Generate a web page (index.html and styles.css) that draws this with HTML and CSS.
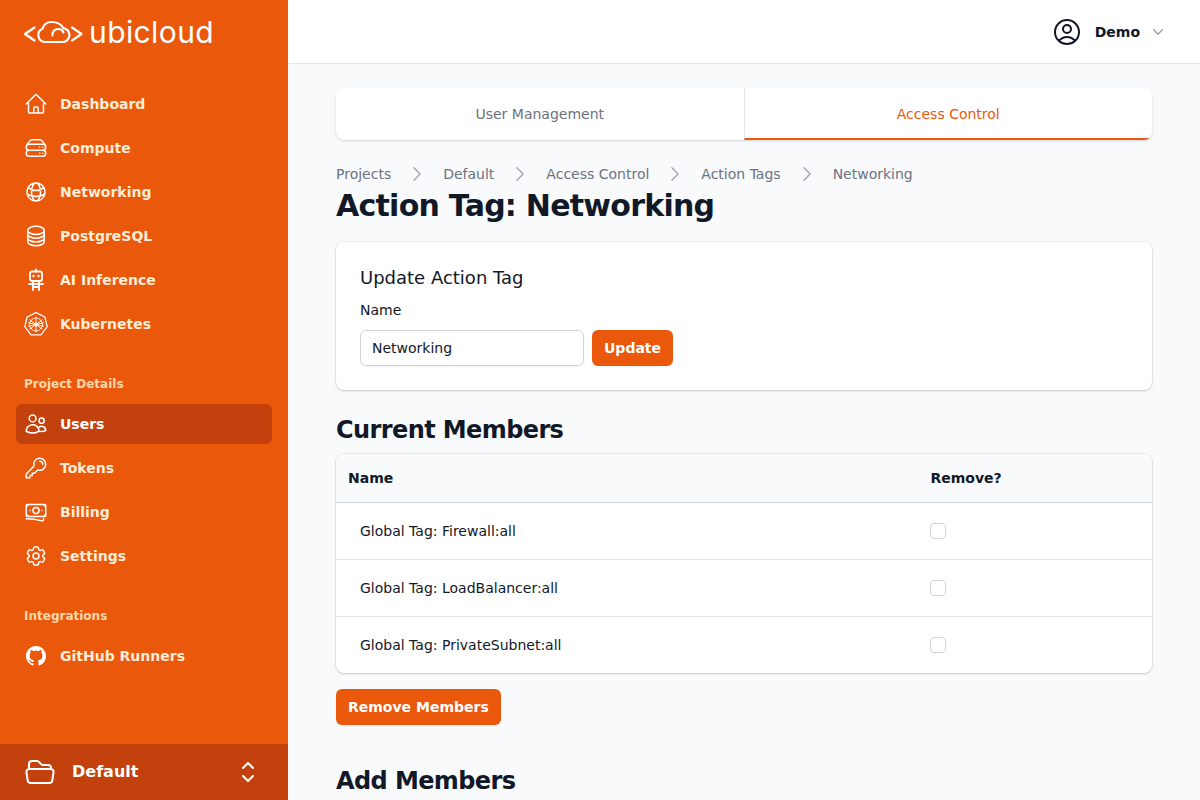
FILE: index.html
```html
<!DOCTYPE html>
<html lang="en">
  <head>
    <meta charset="UTF-8" />
    <meta name="viewport" content="width=device-width, initial-scale=1.0" />
    <title>Ubicloud - Action Tag: Networking</title>
    <link rel="stylesheet" href="styles.css">
  </head>
  <body>
    <!-- sidebar -->
    <aside class="sidebar">
      <div class="logo">
        <svg class="logo-mark" viewBox="0 0 60 26" fill="none" stroke="currentColor" stroke-width="2.2" stroke-linecap="round" stroke-linejoin="round">
          <path d="M10.500 8.500 1 15l9.500 6.500" />
          <path d="M48 8.500 57.500 15 48 21.500" />
          <path d="M20.500 23H38.500a7 7 0 0 0 .8-13.950C37 5 32 3 27.500 3 23 3 19.500 6 18.500 9.800A6.900 6.900 0 0 0 20.500 23Z" />
          <path d="M28.500 16.500a5.500 5.500 0 0 1 5.500-6.500c2.500 0 4.500 1 5.500 3.500" />
        </svg>
        <span class="logo-text">ubicloud</span>
      </div>

      <nav class="nav">
        <a class="nav-item" href="#">
          <svg class="icon" viewBox="0 0 24 24"><path d="m2.250 12 8.954-8.955c.44-.439 1.152-.439 1.591 0L21.750 12M4.500 9.750v10.125c0 .621.504 1.125 1.125 1.125H9.750v-4.875c0-.621.504-1.125 1.125-1.125h2.250c.621 0 1.125.504 1.125 1.125V21h4.125c.621 0 1.125-.504 1.125-1.125V9.750M8.250 21h8.250" /></svg>
          Dashboard
        </a>
        <a class="nav-item" href="#">
          <svg class="icon" viewBox="0 0 24 24"><path d="M5.250 14.250h13.500m-13.500 0a3 3 0 0 1-3-3m3 3a3 3 0 1 0 0 6h13.500a3 3 0 1 0 0-6m-16.500-3a3 3 0 0 1 3-3h13.500a3 3 0 0 1 3 3m-19.500 0a4.500 4.500 0 0 1 .9-2.700L5.737 5.100a3.375 3.375 0 0 1 2.700-1.350h7.126c1.062 0 2.062.5 2.700 1.350l2.587 3.450a4.500 4.500 0 0 1 .9 2.700m0 0a3 3 0 0 1-3 3m0 3h.008v.008h-.008v-.008Zm0-6h.008v.008h-.008v-.008Zm-3 6h.008v.008h-.008v-.008Zm0-6h.008v.008h-.008v-.008Z" /></svg>
          Compute
        </a>
        <a class="nav-item" href="#">
          <svg class="icon" viewBox="0 0 24 24"><path d="M12 21a9.004 9.004 0 0 0 8.716-6.747M12 21a9.004 9.004 0 0 1-8.716-6.747M12 21c2.485 0 4.500-4.030 4.500-9S14.485 3 12 3m0 18c-2.485 0-4.500-4.030-4.500-9S9.515 3 12 3m0 0a8.997 8.997 0 0 1 7.843 4.582M12 3a8.997 8.997 0 0 0-7.843 4.582m15.686 0A11.953 11.953 0 0 1 12 10.500c-2.998 0-5.740-1.100-7.843-2.918m15.686 0A8.959 8.959 0 0 1 21 12c0 .778-.099 1.533-.284 2.253m0 0A17.919 17.919 0 0 1 12 16.500c-3.162 0-6.133-.815-8.716-2.247m0 0A9.015 9.015 0 0 1 3 12c0-1.605.42-3.113 1.157-4.418" /></svg>
          Networking
        </a>
        <a class="nav-item" href="#">
          <svg class="icon" viewBox="0 0 24 24"><path d="M20.250 6.375c0 2.278-3.694 4.125-8.250 4.125S3.750 8.653 3.750 6.375m16.500 0c0-2.278-3.694-4.125-8.250-4.125S3.750 4.097 3.750 6.375m16.500 0v11.250c0 2.278-3.694 4.125-8.250 4.125s-8.250-1.847-8.250-4.125V6.375m16.500 0v3.750m-16.500-3.750v3.750m16.500 0v3.750C20.250 16.153 16.556 18 12 18s-8.250-1.847-8.250-4.125v-3.750m16.500 0c0 2.278-3.694 4.125-8.250 4.125s-8.250-1.847-8.250-4.125" /></svg>
          PostgreSQL
        </a>
        <a class="nav-item" href="#">
          <svg class="icon icon-robot" viewBox="0 0 24 24">
            <rect x="6" y="3.500" width="12" height="9.500" rx="2" />
            <path d="M12 3.500V1.500M5 16h14M9 13v9M15 13v9M9 19h6" />
            <path class="dots" d="M9.500 8h.01M14.500 8h.01" />
          </svg>
          AI Inference
        </a>
        <a class="nav-item" href="#">
          <svg class="icon icon-k8s" viewBox="0 0 24 24">
            <path d="M12 .7 20.900 5 23.200 14.600 17 22.800H7L.8 14.600 3.100 5Z" />
            <g class="k8s-wheel">
              <circle cx="12" cy="12.500" r="6.500" />
              <circle cx="12" cy="12.500" r="1.600" />
              <path d="M12 5v15M6 8l12 9M18 8 6 17M4.500 14.200l15-3.400M19.500 14.200l-15-3.400" />
            </g>
          </svg>
          Kubernetes
        </a>
      </nav>

      <div class="nav-label nav-label-project">Project Details</div>
      <nav class="nav">
        <a class="nav-item active" href="#">
          <svg class="icon" viewBox="0 0 24 24"><path d="M15 19.128a9.380 9.380 0 0 0 2.625.372 9.337 9.337 0 0 0 4.121-.952 4.125 4.125 0 0 0-7.533-2.493M15 19.128v-.003c0-1.113-.285-2.160-.786-3.070M15 19.128v.106A12.318 12.318 0 0 1 8.624 21c-2.331 0-4.512-.645-6.374-1.766l-.001-.109a6.375 6.375 0 0 1 11.964-3.070M12 6.375a3.375 3.375 0 1 1-6.750 0 3.375 3.375 0 0 1 6.750 0Zm8.250 2.250a2.625 2.625 0 1 1-5.250 0 2.625 2.625 0 0 1 5.250 0Z" /></svg>
          Users
        </a>
        <a class="nav-item" href="#">
          <svg class="icon" viewBox="0 0 24 24"><path d="M15.750 5.250a3 3 0 0 1 3 3m3 0a6 6 0 0 1-7.029 5.912c-.563-.097-1.159.026-1.563.43L10.500 17.250H8.250v2.250H6v2.250H2.250v-2.818c0-.597.237-1.170.659-1.591l6.499-6.499c.404-.404.527-1 .43-1.563A6 6 0 1 1 21.750 8.250Z" /></svg>
          Tokens
        </a>
        <a class="nav-item" href="#">
          <svg class="icon" viewBox="0 0 24 24"><path d="M2.250 18.750a60.070 60.070 0 0 1 15.797 2.101c.727.198 1.453-.342 1.453-1.096V18.750M3.750 4.500v.75A.75.75 0 0 1 3 6h-.75m0 0v-.375c0-.621.504-1.125 1.125-1.125H20.250M2.250 6v9m18-10.500v.75c0 .414.336.75.75.75h.75m-1.500-1.500h.375c.621 0 1.125.504 1.125 1.125v9.750c0 .621-.504 1.125-1.125 1.125h-.375m1.500-1.500H21a.75.75 0 0 0-.75.75v.75m0 0H3.750m0 0h-.375a1.125 1.125 0 0 1-1.125-1.125V15m1.500 1.500v-.75A.75.75 0 0 0 3 15h-.75M15 10.500a3 3 0 1 1-6 0 3 3 0 0 1 6 0Zm3 0h.008v.008H18V10.500Zm-12 0h.008v.008H6V10.500Z" /></svg>
          Billing
        </a>
        <a class="nav-item" href="#">
          <svg class="icon" viewBox="0 0 24 24"><path d="M9.594 3.940c.09-.542.56-.94 1.110-.94h2.593c.55 0 1.020.398 1.110.94l.213 1.281c.063.374.313.686.645.87.074.04.147.083.22.127.325.196.72.257 1.075.124l1.217-.456a1.125 1.125 0 0 1 1.370.49l1.296 2.247a1.125 1.125 0 0 1-.26 1.431l-1.003.827c-.293.241-.438.613-.43.992a7.723 7.723 0 0 1 0 .255c-.008.378.137.75.43.991l1.004.827c.424.35.534.955.26 1.430l-1.298 2.247a1.125 1.125 0 0 1-1.369.491l-1.217-.456c-.355-.133-.75-.072-1.076.124a6.470 6.470 0 0 1-.22.128c-.331.183-.581.495-.644.869l-.213 1.281c-.09.543-.56.94-1.110.94h-2.594c-.55 0-1.019-.398-1.110-.94l-.213-1.281c-.062-.374-.312-.686-.644-.87a6.520 6.520 0 0 1-.22-.127c-.325-.196-.72-.257-1.076-.124l-1.217.456a1.125 1.125 0 0 1-1.369-.49l-1.297-2.247a1.125 1.125 0 0 1 .26-1.431l1.004-.827c.292-.24.437-.613.43-.991a6.932 6.932 0 0 1 0-.255c.007-.38-.138-.751-.43-.992l-1.004-.827a1.125 1.125 0 0 1-.26-1.430l1.297-2.247a1.125 1.125 0 0 1 1.370-.491l1.216.456c.356.133.751.072 1.076-.124.072-.044.146-.086.22-.128.332-.183.582-.495.644-.869l.214-1.280Z" /><path d="M15 12a3 3 0 1 1-6 0 3 3 0 0 1 6 0Z" /></svg>
          Settings
        </a>
      </nav>

      <div class="nav-label nav-label-integrations">Integrations</div>
      <nav class="nav">
        <a class="nav-item" href="#">
          <svg class="icon icon-solid" viewBox="0 0 16 16"><path d="M8 0C3.580 0 0 3.580 0 8c0 3.540 2.290 6.530 5.470 7.590.4.07.55-.17.55-.38 0-.19-.01-.82-.01-1.490-2.010.37-2.530-.49-2.690-.94-.09-.23-.48-.94-.82-1.130-.28-.15-.68-.52-.01-.53.63-.01 1.080.58 1.230.82.72 1.210 1.870.87 2.330.66.07-.52.28-.87.51-1.070-1.780-.2-3.640-.89-3.640-3.950 0-.87.31-1.590.82-2.150-.08-.2-.36-1.020.08-2.120 0 0 .67-.21 2.200.82.64-.18 1.320-.27 2-.27.68 0 1.360.09 2 .27 1.530-1.040 2.200-.82 2.200-.82.44 1.100.16 1.920.08 2.120.51.56.82 1.270.82 2.150 0 3.070-1.870 3.750-3.650 3.950.29.25.54.73.54 1.480 0 1.070-.01 1.930-.01 2.200 0 .21.15.46.55.38A8.013 8.013 0 0016 8c0-4.420-3.580-8-8-8z" /></svg>
          GitHub Runners
        </a>
      </nav>

      <div class="project-switch">
        <svg class="icon icon-folder" viewBox="0 0 24 24"><path d="M3.750 9.776c.112-.017.227-.026.344-.026h15.812c.117 0 .232.009.344.026m-16.500 0a2.250 2.250 0 0 0-1.883 2.542l.857 6a2.250 2.250 0 0 0 2.227 1.932H19.050a2.250 2.250 0 0 0 2.227-1.932l.857-6a2.250 2.250 0 0 0-1.883-2.542m-16.500 0V6A2.250 2.250 0 0 1 6 3.750h3.879a1.500 1.500 0 0 1 1.060.44l2.122 2.120a1.500 1.500 0 0 0 1.060.44H18A2.250 2.250 0 0 1 20.250 9v.776" /></svg>
        <span class="project-name">Default</span>
        <svg class="icon icon-updown" viewBox="0 0 24 24"><path d="M8.250 15 12 18.750 15.750 15m-7.500-6L12 5.250 15.750 9" /></svg>
      </div>
    </aside>

    <div class="page">
      <header class="topbar">
        <svg class="icon icon-user" viewBox="0 0 24 24"><path d="M17.982 18.725A7.488 7.488 0 0 0 12 15.750a7.488 7.488 0 0 0-5.982 2.975m11.963 0a9 9 0 1 0-11.963 0m11.963 0A8.966 8.966 0 0 1 12 21a8.966 8.966 0 0 1-5.982-2.275M15 9.750a3 3 0 1 1-6 0 3 3 0 0 1 6 0Z" /></svg>
        <span class="user-name">Demo</span>
        <svg class="icon-caret" viewBox="0 0 20 20"><path d="M5.230 7.210a.75.75 0 011.060.02L10 11.168l3.710-3.938a.75.75 0 111.080 1.040l-4.250 4.500a.75.75 0 01-1.080 0l-4.250-4.500a.75.75 0 01.02-1.060z" /></svg>
      </header>

      <main class="content">
        <div class="tabs">
          <a class="tab" href="#">User Management</a>
          <a class="tab tab-active" href="#">Access Control</a>
        </div>

        <ol class="breadcrumb">
          <li>Projects</li>
          <li><svg class="icon crumb-sep" viewBox="0 0 24 24"><path d="m8.250 4.500 7.500 7.500-7.500 7.500" /></svg>Default</li>
          <li><svg class="icon crumb-sep" viewBox="0 0 24 24"><path d="m8.250 4.500 7.500 7.500-7.500 7.500" /></svg>Access Control</li>
          <li><svg class="icon crumb-sep" viewBox="0 0 24 24"><path d="m8.250 4.500 7.500 7.500-7.500 7.500" /></svg>Action Tags</li>
          <li><svg class="icon crumb-sep" viewBox="0 0 24 24"><path d="m8.250 4.500 7.500 7.500-7.500 7.500" /></svg>Networking</li>
        </ol>
        <h1 class="page-title">Action Tag: Networking</h1>

        <section class="card update-card">
          <h2 class="card-title">Update Action Tag</h2>
          <label class="field-label" for="tagName">Name</label>
          <div class="field-row">
            <input class="field-input" id="tagName" type="text" value="Networking" />
            <button class="btn">Update</button>
          </div>
        </section>

        <h2 class="section-title">Current Members</h2>
        <div class="card table-card">
          <table class="members">
            <thead>
              <tr><th>Name</th><th class="col-remove">Remove?</th></tr>
            </thead>
            <tbody>
              <tr><td>Global Tag: Firewall:all</td><td class="col-remove"><span class="checkbox"></span></td></tr>
              <tr><td>Global Tag: LoadBalancer:all</td><td class="col-remove"><span class="checkbox"></span></td></tr>
              <tr><td>Global Tag: PrivateSubnet:all</td><td class="col-remove"><span class="checkbox"></span></td></tr>
            </tbody>
          </table>
        </div>
        <button class="btn btn-remove">Remove Members</button>

        <h2 class="section-title section-add">Add Members</h2>
      </main>
    </div>
  </body>
</html>
```

FILE: styles.css
```css
* {
  box-sizing: border-box;
}

html,
body {
  height: 100%;
}

body {
  margin: 0;
  display: flex;
  height: 800px;
  overflow: hidden;
  background: #f9fafb;
  color: #111827;
  font-family: "DejaVu Sans", sans-serif;
  font-size: 14px;
}

/* sidebar */
.sidebar {
  display: flex;
  flex-direction: column;
  flex: none;
  width: 288px;
  height: 800px;
  padding: 0 16px;
  background: #ea580c;
  color: #ffedd5;
}

.logo {
  display: flex;
  align-items: center;
  height: 64px;
  padding-left: 8px;
  color: #fff;
}

.logo-mark {
  width: 60px;
  height: 26px;
}

.logo-text {
  margin-left: 5px;
  color: #fff;
  font-family: "Inter", sans-serif;
  font-size: 30px;
  font-weight: 400;
  letter-spacing: 0.4px;
  line-height: 64px;
}

.nav {
  display: flex;
  flex-direction: column;
  gap: 4px;
}

.logo + .nav {
  margin-top: 20px;
}

.nav-item {
  display: flex;
  align-items: center;
  gap: 12px;
  height: 40px;
  padding: 0 8px;
  border-radius: 6px;
  color: #ffedd5;
  font-size: 14px;
  font-weight: 700;
  text-decoration: none;
}

.nav-item.active {
  background: #c2410c;
  color: #fff;
}

.nav-label {
  padding-left: 8px;
  color: #fed7aa;
  font-size: 12px;
  font-weight: 700;
  line-height: 16px;
}

.nav-label-project {
  margin: 32px 0 12px;
}

.nav-label-integrations {
  margin: 32px 0 12px;
}

.icon {
  flex: none;
  width: 24px;
  height: 24px;
  fill: none;
  stroke: #fff;
  stroke-width: 1.5;
  stroke-linecap: round;
  stroke-linejoin: round;
}

.icon-robot {
  stroke-width: 1.8;
}

.icon .dots {
  stroke-width: 2.4;
}

.icon-k8s {
  stroke-width: 1.3;
}

.k8s-wheel {
  stroke-width: 0.9;
}

.icon-solid {
  width: 20px;
  height: 20px;
  margin: 0 2px;
  fill: #fff;
  stroke: none;
}

.project-switch {
  display: flex;
  align-items: center;
  height: 56px;
  margin: auto -16px 0;
  padding: 0 24px;
  background: #c2410c;
  color: #fff;
}

.icon-folder {
  width: 32px;
  height: 32px;
}

.project-name {
  margin-left: 16px;
  padding-bottom: 2px;
  font-size: 16px;
  font-weight: 700;
}

.icon-updown {
  width: 32px;
  height: 32px;
  margin-left: auto;
}

/* top bar */
.page {
  flex: 1;
  min-width: 0;
}

.topbar {
  display: flex;
  align-items: center;
  justify-content: flex-end;
  height: 64px;
  padding-right: 32px;
  border-bottom: 1px solid #e5e7eb;
  background: #fff;
}

.icon-user {
  width: 32px;
  height: 32px;
  stroke: #111827;
}

.user-name {
  margin-left: 12px;
  font-size: 14px;
  font-weight: 700;
}

.icon-caret {
  flex: none;
  width: 20px;
  height: 20px;
  margin-left: 8px;
  fill: #9ca3af;
}

/* main content */
.content {
  padding: 24px 48px;
}

.tabs {
  display: flex;
  height: 52px;
  border-radius: 8px;
  background: #fff;
  box-shadow: 0 1px 3px rgba(0, 0, 0, 0.1), 0 1px 2px rgba(0, 0, 0, 0.06);
  overflow: hidden;
}

.tab {
  display: flex;
  flex: 1;
  align-items: center;
  justify-content: center;
  color: #6b7280;
  font-size: 14px;
  text-decoration: none;
}

.tab-active {
  padding-top: 2px;
  border-left: 1px solid #e5e7eb;
  border-bottom: 2px solid #ea580c;
  color: #ea580c;
}

.breadcrumb {
  display: flex;
  align-items: center;
  gap: 16px;
  margin: 24px 0 0;
  padding: 0;
  list-style: none;
  color: #6b7280;
  font-size: 14px;
  line-height: 20px;
}

.breadcrumb li {
  display: flex;
  align-items: center;
  gap: 16px;
}

.crumb-sep {
  width: 20px;
  height: 20px;
  stroke: #9ca3af;
}

.page-title {
  margin: 4px 0 0;
  color: #111827;
  font-size: 30px;
  font-weight: 700;
  letter-spacing: -0.025em;
  line-height: 36px;
}

.card {
  border-radius: 8px;
  background: #fff;
  box-shadow: 0 0 0 1px rgba(0, 0, 0, 0.05), 0 1px 3px rgba(0, 0, 0, 0.1), 0 1px 2px rgba(0, 0, 0, 0.06);
}

.update-card {
  margin-top: 18px;
  padding: 24px;
}

.card-title {
  margin: 0;
  font-size: 18px;
  font-weight: 400;
  line-height: 24px;
}

.field-label {
  display: block;
  margin-top: 8px;
  color: #111827;
  font-size: 14px;
  line-height: 24px;
}

.field-row {
  display: flex;
  gap: 8px;
  margin-top: 8px;
}

.field-input {
  width: 224px;
  height: 36px;
  padding: 0 11px;
  border: 1px solid #d1d5db;
  border-radius: 6px;
  color: #111827;
  font-family: inherit;
  font-size: 14px;
  box-shadow: 0 1px 2px rgba(0, 0, 0, 0.05);
}

.btn {
  height: 36px;
  padding: 0 12px;
  border: none;
  border-radius: 6px;
  background: #ea580c;
  color: #fff;
  font-family: inherit;
  font-size: 14px;
  font-weight: 700;
  box-shadow: 0 1px 2px rgba(0, 0, 0, 0.05);
}

.section-title {
  margin: 24px 0 8px;
  color: #111827;
  font-size: 24px;
  font-weight: 700;
  letter-spacing: -0.025em;
  line-height: 32px;
}

.table-card {
  overflow: hidden;
}

.members {
  width: 100%;
  border-collapse: collapse;
  table-layout: fixed;
}

.members th {
  height: 48px;
  padding: 0 12px;
  border-bottom: 1px solid #d1d5db;
  background: #f9fafb;
  font-size: 14px;
  font-weight: 700;
  text-align: left;
}

.members td {
  height: 57px;
  padding: 0 24px;
  border-top: 1px solid #e5e7eb;
  font-size: 14px;
}

.members tbody tr:first-child td {
  border-top: none;
}

.members .col-remove {
  width: 234px;
  padding-left: 12px;
}

.members th.col-remove {
  padding-left: 12.5px;
}

.checkbox {
  display: block;
  width: 16px;
  height: 16px;
  border: 1px solid #d1d5db;
  border-radius: 4px;
  background: #fff;
}

.btn-remove {
  display: block;
  margin-top: 16px;
}

.section-add {
  margin-top: 40px;
}
```
